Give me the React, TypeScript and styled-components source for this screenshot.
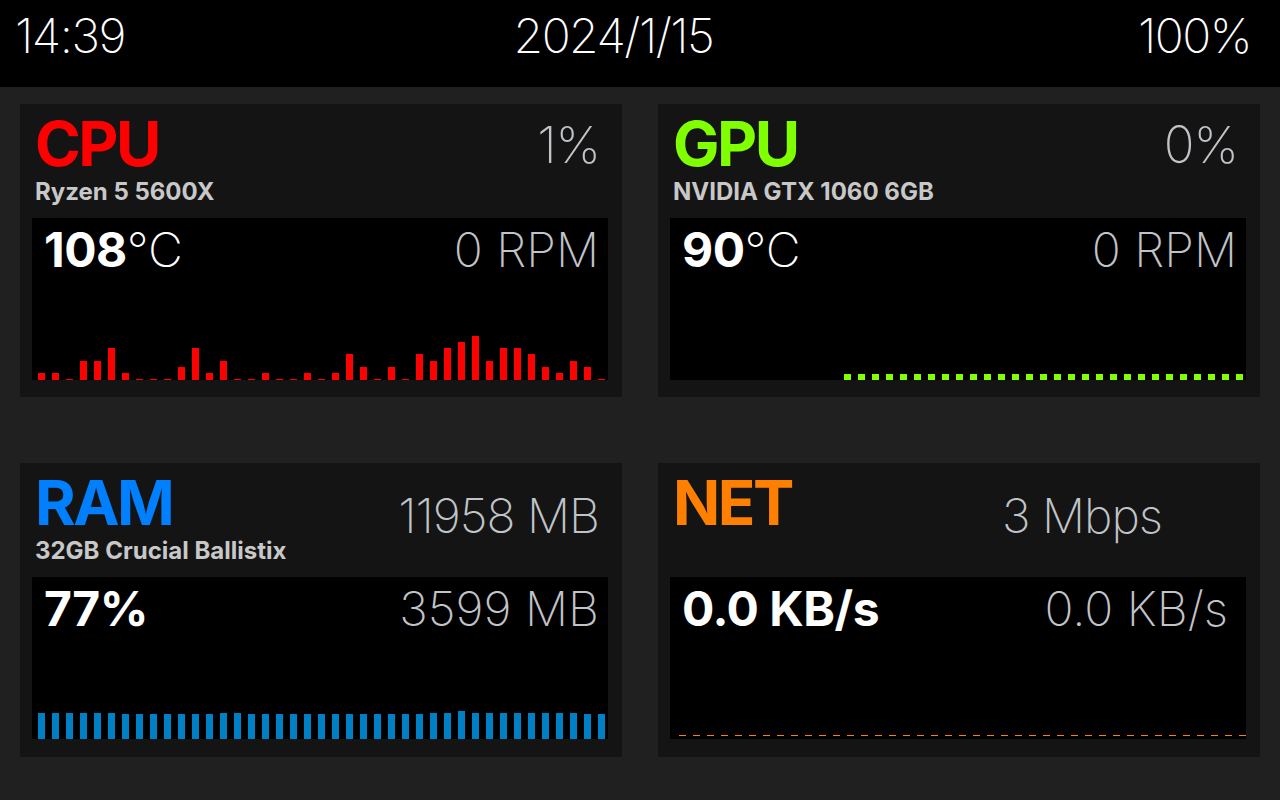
import React from "react";
import styled, { createGlobalStyle } from "styled-components";

const GlobalStyle = createGlobalStyle`
  html, body { margin: 0; padding: 0; background: #202020; }
  body { font-family: Inter, "DejaVu Sans", sans-serif; width: 1280px; height: 800px; overflow: hidden; }
  * { box-sizing: border-box; }
`;

const THIN = `Inter, "DejaVu Sans", sans-serif`;

const TopBar = styled.header`
  height: 87px;
  background: #000;
  display: flex;
  justify-content: space-between;
  align-items: flex-start;
  padding: 12px 29px 0 15px;
  color: #fff;
  font-family: ${THIN};
  font-weight: 200;
  font-size: 48px;
  line-height: 1;
`;

const TopText = styled.span<{ $shift?: number }>`
  margin-right: ${(p) => p.$shift ?? 0}px;
  letter-spacing: -1.5px;
`;

const Grid = styled.main`
  display: grid;
  grid-template-columns: 602px 602px;
  grid-template-rows: 293px 294px;
  column-gap: 36px;
  row-gap: 66px;
  padding: 17px 20px 0 20px;
`;

const Card = styled.section`
  background: #141414;
  display: flex;
  flex-direction: column;
  padding: 0 14px 17px 12px;
`;

const CardHead = styled.div`
  height: 114px;
  display: flex;
  justify-content: space-between;
  align-items: flex-start;
`;

const TitleBlock = styled.div`
  display: flex;
  flex-direction: column;
  padding: 9px 0 0 3px;
`;

const Title = styled.h2<{ $color: string }>`
  margin: 0;
  color: ${(p) => p.$color};
  font-family: Inter, sans-serif;
  font-weight: 700;
  font-size: 62px;
  line-height: 1;
  letter-spacing: -2.5px;
`;

const Subtitle = styled.div`
  margin-top: 5px;
  color: #c8c8c8;
  font-family: Inter, sans-serif;
  font-weight: 700;
  font-size: 24px;
  line-height: 1;
`;

const HeadValue = styled.div<{ $top: number; $right: number; $size: number }>`
  margin-top: ${(p) => p.$top}px;
  margin-right: ${(p) => p.$right}px;
  color: #c0c4c8;
  font-family: ${THIN};
  font-weight: 200;
  font-size: ${(p) => p.$size}px;
  line-height: 1;
  letter-spacing: -1px;
`;

const Graph = styled.div`
  height: 162px;
  background: #000;
  display: flex;
  flex-direction: column;
  justify-content: space-between;
`;

const ValueRow = styled.div<{ $right: number }>`
  display: flex;
  justify-content: space-between;
  align-items: flex-start;
  padding: 8px ${(p) => p.$right}px 0 12px;
  font-size: 48px;
  line-height: 1;
`;

const Strong = styled.span`
  color: #fff;
  font-family: Inter, sans-serif;
  font-weight: 700;
  letter-spacing: -0.5px;
`;

const Unit = styled.span`
  color: #fff;
  font-family: ${THIN};
  font-weight: 200;
  margin-left: 0;
  letter-spacing: -3px;
`;

const Light = styled.span`
  color: #c0c4c8;
  font-family: ${THIN};
  font-weight: 200;
`;

const Bars = styled.div<{ $left?: number; $bottom?: number }>`
  display: flex;
  align-items: flex-end;
  gap: 7px;
  padding-left: ${(p) => p.$left ?? 6}px;
  margin-bottom: ${(p) => p.$bottom ?? 0}px;
  height: 50px;
`;

const Bar = styled.div<{ $color: string }>`
  width: 7px;
  background: ${(p) => p.$color};
  flex: none;
`;

const cpuBars = [7, 7, 1, 19, 19, 32, 7, 1, 1, 1, 13, 32, 7, 19, 1, 1, 7, 1, 1, 7, 1, 7, 26, 13, 1, 13, 1, 26, 19, 32, 38, 44, 19, 32, 32, 26, 13, 7, 19, 13, 1];
const gpuBars = Array.from({ length: 41 }, (_, i) => (i >= 12 ? 6 : 0));
const ramBars = [26, 26, 26, 26, 26, 26, 25, 25, 25, 25, 25, 25, 25, 26, 26, 25, 25, 25, 25, 25, 25, 25, 25, 25, 25, 25, 25, 25, 26, 26, 28, 26, 26, 26, 26, 26, 26, 26, 26, 25, 25];
const netDashes = Array.from({ length: 41 }, () => 1);

function BarChart({ data, color, left, bottom }: { data: number[]; color: string; left?: number; bottom?: number }) {
  return (
    <Bars $left={left} $bottom={bottom}>
      {data.map((h, i) => (
        <Bar key={i} $color={color} style={{ height: h }} />
      ))}
    </Bars>
  );
}

export default function App() {
  return (
    <>
      <GlobalStyle />
      <TopBar>
        <TopText>14:39</TopText>
        <TopText $shift={36}>2024/1/15</TopText>
        <TopText>100%</TopText>
      </TopBar>
      <Grid>
        <Card>
          <CardHead>
            <TitleBlock>
              <Title $color="#ff0000">CPU</Title>
              <Subtitle>Ryzen 5 5600X</Subtitle>
            </TitleBlock>
            <HeadValue $top={15} $right={8} $size={51}>1%</HeadValue>
          </CardHead>
          <Graph>
            <ValueRow $right={9}>
              <span>
                <Strong>108</Strong>
                <Unit>℃</Unit>
              </span>
              <Light>0 RPM</Light>
            </ValueRow>
            <BarChart data={cpuBars} color="#ff0000" />
          </Graph>
        </Card>
        <Card>
          <CardHead>
            <TitleBlock>
              <Title $color="#80ff00">GPU</Title>
              <Subtitle>NVIDIA GTX 1060 6GB</Subtitle>
            </TitleBlock>
            <HeadValue $top={15} $right={8} $size={51}>0%</HeadValue>
          </CardHead>
          <Graph>
            <ValueRow $right={9}>
              <span>
                <Strong>90</Strong>
                <Unit>℃</Unit>
              </span>
              <Light>0 RPM</Light>
            </ValueRow>
            <BarChart data={gpuBars} color="#80ff00" />
          </Graph>
        </Card>
        <Card>
          <CardHead>
            <TitleBlock>
              <Title $color="#0080ff">RAM</Title>
              <Subtitle>32GB Crucial Ballistix</Subtitle>
            </TitleBlock>
            <HeadValue $top={29} $right={9} $size={48}>11958 MB</HeadValue>
          </CardHead>
          <Graph>
            <ValueRow $right={9}>
              <Strong>77%</Strong>
              <Light>3599 MB</Light>
            </ValueRow>
            <BarChart data={ramBars} color="#0080c4" />
          </Graph>
        </Card>
        <Card>
          <CardHead>
            <TitleBlock>
              <Title $color="#ff8000">NET</Title>
            </TitleBlock>
            <HeadValue $top={29} $right={84} $size={48}>3 Mbps</HeadValue>
          </CardHead>
          <Graph>
            <ValueRow $right={18}>
              <Strong>0.0 KB/s</Strong>
              <Light>0.0 KB/s</Light>
            </ValueRow>
            <BarChart data={netDashes} color="#ff8000" left={9} bottom={3} />
          </Graph>
        </Card>
      </Grid>
    </>
  );
}
